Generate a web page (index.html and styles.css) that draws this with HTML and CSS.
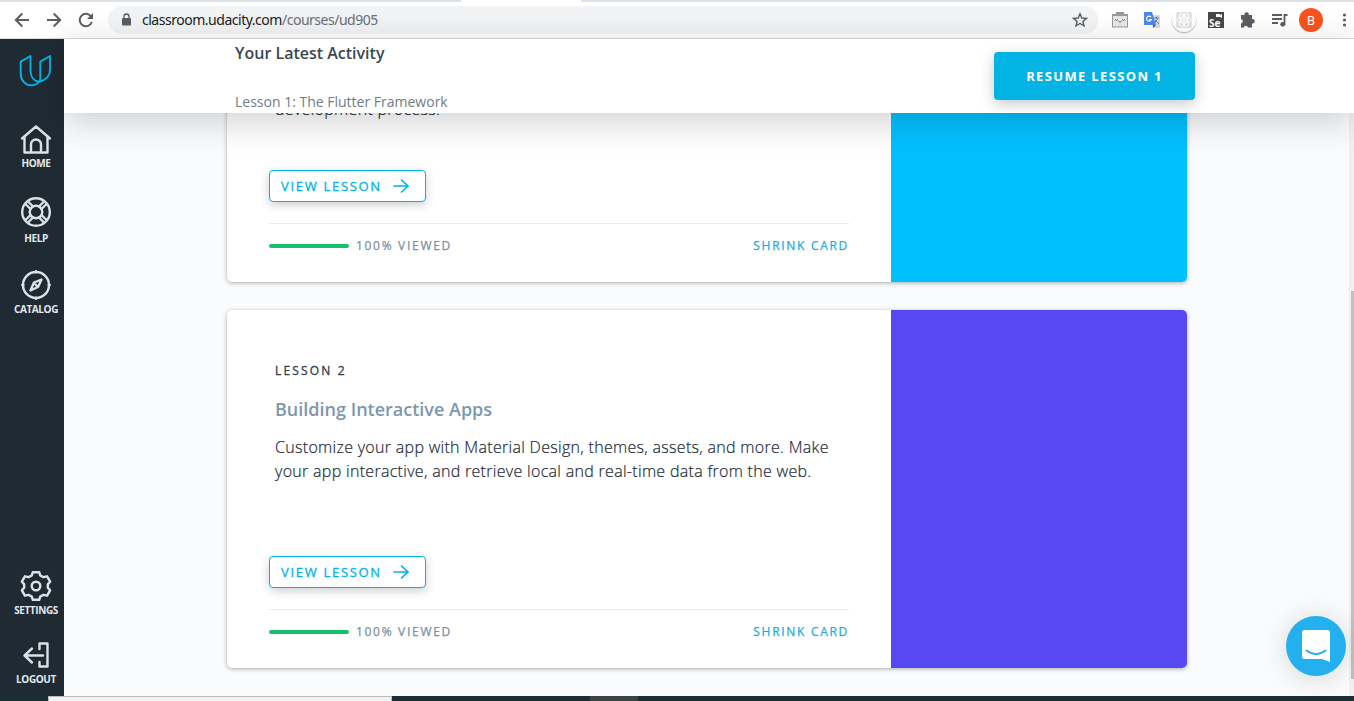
FILE: index.html
```html
<!DOCTYPE html>
<html lang="en">
<head>
<meta charset="utf-8">
<title>Udacity Classroom</title>
<link rel="stylesheet" href="styles.css">
</head>
<body>
<div class="window">
  <div class="tabstrip"><div class="tab"></div></div>
  <div class="toolbar">
    <svg class="nav" width="96" height="36" viewBox="0 0 96 36" fill="none" stroke="#5a5e63" stroke-width="2">
      <path d="M29 18H16M22.300 11.500L15.800 18l6.500 6.500M47 18h13M53.700 11.500l6.500 6.500-6.500 6.500"/>
      <path d="M91 14.500a6.200 6.200 0 1 0 .8 5.500"/><path d="M93 11v6h-6z" fill="#5a5e63" stroke="none"/>
    </svg>
    <div class="address">
      <svg width="10" height="14" viewBox="0 0 10 14"><rect y="5" width="9" height="7.500" rx="1" fill="#5a5e63"/><path d="M2 5V3.500a2.500 2.500 0 0 1 5 0V5" fill="none" stroke="#5a5e63" stroke-width="1.300"/></svg>
      <div class="url">classroom.udacity.com<span>/courses/ud905</span></div>
      <svg class="star" width="16" height="16" viewBox="0 0 16 16"><path d="M8 1.800l1.800 4.200 4.600.4-3.500 3 1.100 4.500L8 11.500l-4 2.400 1.100-4.500-3.500-3 4.600-.4z" fill="none" stroke="#5a5e63" stroke-width="1.400"/></svg>
    </div>
    <svg class="extensions" width="256" height="36" viewBox="1098 2 256 36">
      <path d="M1116 12h8v2h4v13.500h-16V14h4z" fill="#999"/><path d="M1113 16h14v10.500h-14z" fill="#e8e8e8"/><path d="M1115 19.500q1.500 2 3 0M1122 19.500q1.500 2 3 0M1118.500 21.500q1.500 1 3 0" fill="none" stroke="#666"/>
      <path d="M1150 15h10v13h-7z" fill="#d8dadd"/><path d="M1154 18h5M1156.500 16.500v2M1158 18l-4 6M1155 20l4 4" stroke="#6b84a3" fill="none"/><path d="M1144 12h8l4 13h-12z" fill="#4c88ec"/><path d="M1153 25h3l-3 3z" fill="#2856c4"/><path d="M1151 17a2.500 2.500 0 1 0 .4 2.500H1149" fill="none" stroke="#fff" stroke-width="1.200"/>
      <circle cx="1184" cy="21" r="12.500" fill="#ccc"/><circle cx="1184" cy="20" r="12" fill="#fff"/><rect x="1176" y="12" width="16" height="16" rx="2" fill="#e3e3e3"/><g fill="none" stroke="#fff"><ellipse cx="1184" cy="20" rx="7" ry="2.800"/><ellipse cx="1184" cy="20" rx="7" ry="2.800" transform="rotate(60 1184 20)"/><ellipse cx="1184" cy="20" rx="7" ry="2.800" transform="rotate(120 1184 20)"/></g><circle cx="1184" cy="20" r="1.500" fill="#fff"/>
      <rect x="1208" y="12" width="16" height="16" fill="#484848"/><text class="se" x="1209" y="26.500">Se</text><path d="M1216 14h4v1l2-1v4l-2-1h-4z" fill="#fff"/>
      <path d="M1241 15h3.500a2.200 2.200 0 1 1 4.200 0h3.300v4a2.300 2.300 0 1 1 0 4.500v4h-4a2.200 2.200 0 0 0-4.300 0h-2.700v-4a2.300 2.300 0 0 0 0-4.500z" fill="#5a5e63"/>
      <path d="M1272 15h10M1272 19h10M1272 23h6M1284.500 25v-10h3" fill="none" stroke="#5a5e63" stroke-width="1.800"/><circle cx="1282.700" cy="24.300" r="2.400" fill="#5a5e63"/>
      <circle cx="1311" cy="20" r="12" fill="#f9521e"/><text class="avatar" x="1311" y="24.500">B</text>
      <g fill="#5a5e63"><circle cx="1344.500" cy="15" r="1.600"/><circle cx="1344.500" cy="20" r="1.600"/><circle cx="1344.500" cy="25" r="1.600"/></g>
    </svg>
  </div>

  <div class="page">
    <nav class="sidebar">
      <svg class="logo" width="34" height="34" viewBox="0 0 34 34" fill="none" stroke="#02b3e4" stroke-width="1.900" stroke-linejoin="round"><path d="M11.500 2L1.700 7.600V19c0 7.500 4.500 12.300 10.300 12.300 3.500 0 6-1.300 8-3.500C15 27 11.500 23 11.500 17z"/><path d="M31 2L21.300 7.600v17c0 1.200-.4 2.300-1 3.200C26.600 26.500 31 22 31 16z"/></svg>
      <a class="item home"><svg width="32" height="32" viewBox="0 0 32 32"><path d="M2 14.500L16 2.500l14 12M4.500 13v15.500h23V13M11 28v-7.500a5 5 0 0 1 10 0V28"/></svg>HOME</a>
      <a class="item help"><svg width="32" height="32" viewBox="0 0 32 32"><circle cx="16" cy="16" r="13.800"/><circle cx="16" cy="16" r="6.300"/><path d="M5.500 8l5 5M8 5.500l5 5M24 5.500l-5 5M26.500 8l-5 5M5.500 24l5-5M8 26.500l5-5M24 26.500l-5-5M26.500 24l-5-5"/></svg>HELP</a>
      <a class="item catalog"><svg width="32" height="32" viewBox="0 0 32 32"><circle cx="16" cy="16" r="13"/><path d="M16 2.300v1M16 28.700v1M2.300 16h1M28.700 16h1"/><path d="M21.500 10.500l-7.500 3-3.500 8 7.500-3.500zM14 14l4 4"/></svg>CATALOG</a>
      <a class="item settings"><svg width="32" height="32" viewBox="0 0 32 32"><path d="M12.800 2.200h6.400l1 3.200 3.300 1.800 3.600-.9 3 5.400-2.300 2.700v3.200l2.300 2.700-3 5.400-3.600-.9-3.300 1.800-1 3.200h-6.400l-1-3.200-3.300-1.800-3.600.9-3-5.400 2.300-2.700v-3.200l-2.300-2.700 3-5.400 3.600.9 3.300-1.800z"/><circle cx="16" cy="16" r="4.300"/></svg>SETTINGS</a>
      <a class="item logout"><svg width="32" height="32" viewBox="0 0 32 32"><path d="M4.500 16.500H23M12 9.500l-7.500 7 7.500 7M19.500 10V4.500h8v23h-8V23"/></svg>LOGOUT</a>
    </nav>

    <div class="content">
      <header class="activity">
        <div class="latest"><h2>Your Latest Activity</h2><p>Lesson 1: The Flutter Framework</p></div>
        <button class="resume">RESUME LESSON 1</button>
      </header>
      <div class="viewport">
        <main class="lessons">
          <article class="card scrolled">
            <div class="body">
              <p class="summary">development process.</p>
              <button class="view"><span>VIEW LESSON</span><svg width="18" height="16" viewBox="0 0 18 16"><path d="M2 8h14M9.500 2L16 8l-6.500 6"/></svg></button>
              <footer><div class="bar"></div><span class="viewed">100% VIEWED</span><a>SHRINK CARD</a></footer>
            </div>
            <div class="cover cyan"></div>
          </article>
          <article class="card full">
            <div class="body">
              <div class="number">LESSON 2</div>
              <h3>Building Interactive Apps</h3>
              <p class="summary">Customize your app with Material Design, themes, assets, and more. Make<br>your app interactive, and retrieve local and real-time data from the web.</p>
              <button class="view"><span>VIEW LESSON</span><svg width="18" height="16" viewBox="0 0 18 16"><path d="M2 8h14M9.500 2L16 8l-6.500 6"/></svg></button>
              <footer><div class="bar"></div><span class="viewed">100% VIEWED</span><a>SHRINK CARD</a></footer>
            </div>
            <div class="cover violet"></div>
          </article>
        </main>
        <div class="scrollbar"><div class="thumb"></div></div>
      </div>
    </div>
  </div>
  <div class="taskbar"><div class="search"></div><div class="task"></div></div>
  <div class="chat"><svg width="28" height="32" viewBox="0 0 28 32"><path d="M3 0h22q3 0 3 3v29l-8-3H3q-3 0-3-3V3q0-3 3-3z" fill="#fff"/><path d="M4.500 20.500q9.500 7.200 19 0" fill="none" stroke="#24afee" stroke-width="1.800" stroke-linecap="round"/></svg></div>
</div>
</body>
</html>
```
FILE: styles.css
```css
* { box-sizing: border-box; }
body { margin: 0; font-family: "Open Sans", sans-serif; color: #2e3d49; }
h2, h3, p { margin: 0; }
button { font-family: inherit; padding: 0; }
.window { position: relative; width: 1354px; height: 701px; overflow: hidden; display: flex; flex-direction: column; }
.tabstrip { height: 2px; background: #dee1e6; flex: none; }
.tab { width: 120px; height: 2px; margin-left: 461px; background: #fff; }
.toolbar { height: 37px; flex: none; display: flex; border-bottom: 1px solid #d9dadb; background: #fff; }
.nav { margin-right: 12px; }
.address { width: 990px; height: 28px; margin-top: 4px; padding: 0 10px 0 14px; border-radius: 14px; background: #f1f3f4; display: flex; align-items: center; }
.url { margin-left: 10px; flex: 1; font: 14px/20px "Noto Sans", sans-serif; letter-spacing: -.48px; color: #202124; }
.url span { color: #6b6f74; }
.se { font: bold 10px "Open Sans", sans-serif; fill: #fff; }
.avatar { font: 13px Roboto, sans-serif; fill: #fff; text-anchor: middle; }

.page { flex: 1; min-height: 0; display: flex; }
.sidebar { width: 64px; flex: none; padding: 15px 0 10px; background: #1f2a33; display: flex; flex-direction: column; }
.logo { margin-left: 19px; flex: none; }
.item { width: 72px; display: flex; flex-direction: column; align-items: center; color: #e2e8ed; font-size: 10px; font-weight: 700; line-height: 14px; letter-spacing: -.4px; }
.item svg { fill: none; stroke: #dbe2e8; stroke-width: 2.400; stroke-linejoin: round; stroke-linecap: round; }
.home { margin-top: 36px; }
.help { margin-top: 26px; }
.help svg { margin-bottom: 3px; }
.catalog { margin-top: 24px; }
.catalog svg { margin-bottom: 1px; }
.settings { margin-top: auto; }
.settings svg { margin-bottom: 1px; }
.logout { margin-top: 22px; }
.logout svg { margin-bottom: 1px; }

.content { flex: 1; display: flex; flex-direction: column; min-width: 0; }
.activity { height: 74px; flex: none; z-index: 1; background: #fff; box-shadow: 0 8px 36px rgba(0,0,0,.19); display: flex; justify-content: space-between; padding: 0 159px 0 171px; }
.latest h2 { margin-top: 2px; font-size: 16px; line-height: 24px; font-weight: 600; color: #3a4853; }
.latest p { margin-top: 27px; font-size: 14px; line-height: 20px; color: #717c86; }
.resume { width: 201px; height: 48px; margin-top: 13px; border: 0; border-radius: 4px; background: #02b3e4; color: #fff; font-size: 13px; font-weight: 700; letter-spacing: 1.350px; box-shadow: 0 4px 14px rgba(46,61,73,.28); }
.viewport { flex: 1; min-height: 0; display: flex; justify-content: space-between; background: #fafbfd; overflow: hidden; }
.lessons { margin-left: 163px; width: 960px; display: flex; flex-direction: column; gap: 28px; }
.card { flex: none; display: flex; background: #fff; border-radius: 5px; box-shadow: 0 1px 4px rgba(0,0,0,.32); }
.scrolled { height: 189px; margin-top: -20px; }
.full { height: 358px; }
.body { width: 664px; padding: 0 42px; display: flex; flex-direction: column; }
.cover { width: 296px; border-radius: 0 5px 5px 0; }
.cyan { background: #02c0ff; }
.violet { background: #5848f4; }
.summary { padding-left: 6px; font-size: 16px; line-height: 24px; font-weight: 300; letter-spacing: .305px; color: #1d2b36; -webkit-text-stroke: .2px #1d2b36; white-space: nowrap; }
.scrolled .summary { margin-top: 4px; }
.number { padding: 51px 0 0 6px; font-size: 12px; line-height: 20px; letter-spacing: 2.150px; -webkit-text-stroke: .3px; }
h3 { padding: 14px 0 0 6px; font-size: 18px; line-height: 28px; font-weight: 600; color: #7d97ad; }
.full .summary { margin-top: 12px; }
.view { width: 157px; height: 32px; margin-top: auto; padding: 0 15px 0 11px; display: flex; align-items: center; justify-content: space-between; border: 1px solid #02b3e4; border-radius: 4px; background: #fff; color: #02b3e4; font-size: 13px; letter-spacing: 1.700px; -webkit-text-stroke: .3px; white-space: nowrap; box-shadow: 0 3px 10px rgba(46,61,73,.24); }
.view svg { flex: none; fill: none; stroke: #02b3e4; stroke-width: 1.700; stroke-linecap: round; }
.body footer { height: 59px; flex: none; margin-top: 21px; padding-bottom: 14px; border-top: 1px solid #e9ebed; display: flex; align-items: center; font-size: 12px; line-height: 18px; letter-spacing: 1.700px; -webkit-text-stroke: .25px; }
.bar { width: 80px; height: 4px; border-radius: 2px; background: #15c26b; margin-right: 7px; }
.viewed { color: #7d8fa0; }
.body footer a { margin-left: auto; color: #1cabe2; }
.scrollbar { width: 5px; background: #f0f0f0; padding: 178px 0 0 2px; }
.thumb { height: 388px; background: #c1c1c1; }
.taskbar { height: 5px; flex: none; display: flex; background: #1b2e35; }
.search { width: 344px; margin-left: 48px; background: #f3f3f3; border: solid #bbb; border-width: 1px 1px 0; }
.task { width: 48px; margin-left: 198px; background: #3d4244; }
.chat { position: absolute; z-index: 2; left: 1286px; top: 616px; width: 60px; height: 60px; border-radius: 50%; background: #24afee; box-shadow: 0 2px 28px rgba(0,0,0,.15); display: flex; justify-content: center; padding-top: 14px; }
```
